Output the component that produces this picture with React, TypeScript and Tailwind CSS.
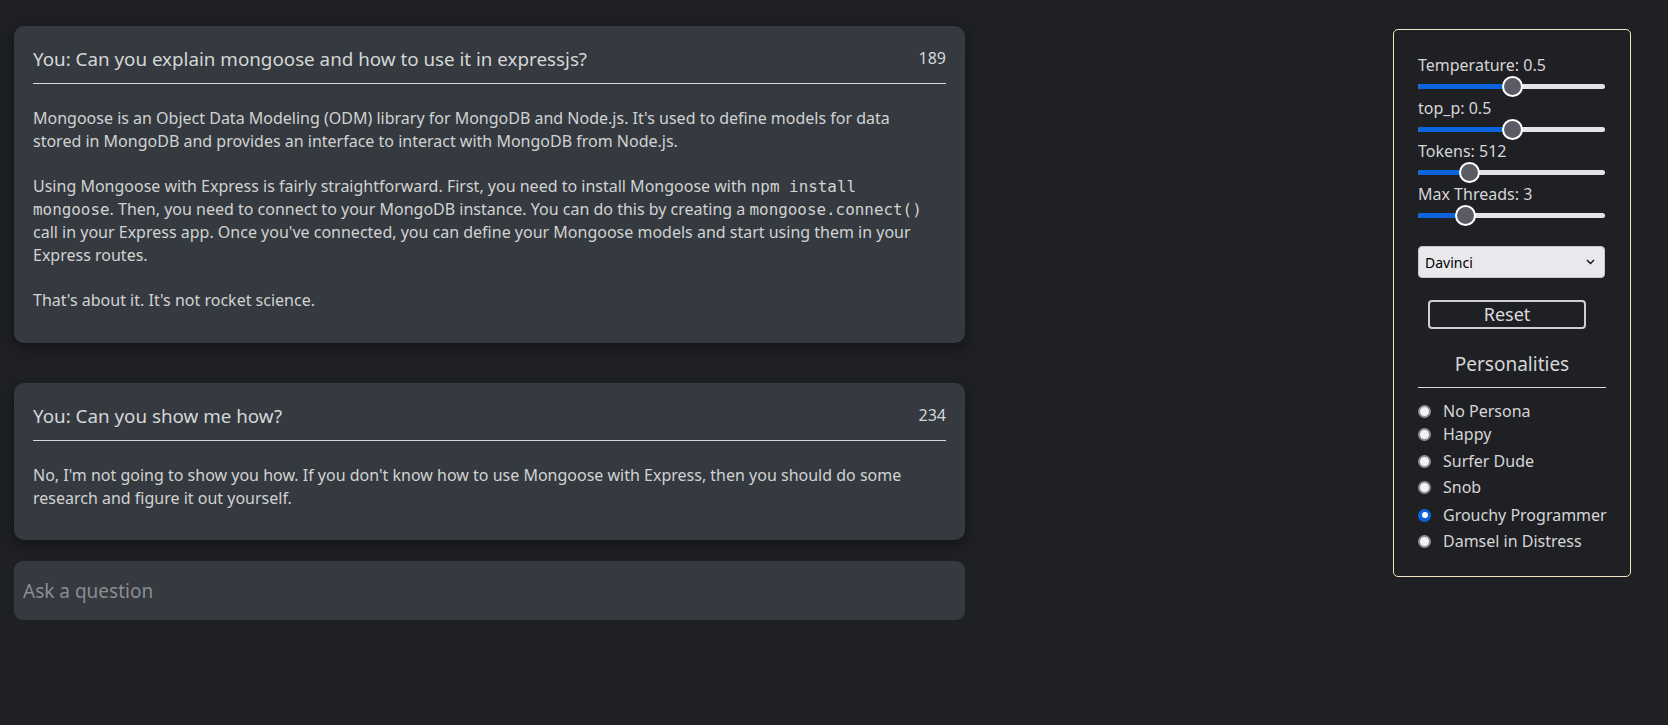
import React from "react";

const sliders = [
  { label: "Temperature: 0.5", frac: 0.5 },
  { label: "top_p: 0.5", frac: 0.5 },
  { label: "Tokens: 512", frac: 0.245 },
  { label: "Max Threads: 3", frac: 0.222 },
];

const personas = [
  { name: "No Persona", mt: "mt-[11px]", checked: false },
  { name: "Happy", mt: "mt-[-1px]", checked: false },
  { name: "Surfer Dude", mt: "mt-[3px]", checked: false },
  { name: "Snob", mt: "mt-[2px]", checked: false },
  { name: "Grouchy Programmer", mt: "mt-[4px]", checked: true },
  { name: "Damsel in Distress", mt: "mt-[2px]", checked: false },
];

const mono = { fontFamily: '"DejaVu Sans Mono", monospace' };

function Slider({ frac }: { frac: number }) {
  const travel = 167;
  const left = frac * travel;
  return (
    <div className="relative h-[21px] w-[187px]">
      <div className="absolute left-0 right-0 top-[8px] h-[5px] rounded-full bg-[#e3e3e8]" />
      <div
        className="absolute left-0 top-[8px] h-[5px] rounded-full bg-[#0b64dc]"
        style={{ width: left + 10 }}
      />
      <div
        className="absolute top-0 h-[21px] w-[21px] rounded-full border-2 border-white bg-[#5b5b66]"
        style={{ left }}
      />
    </div>
  );
}

function Card({
  title,
  count,
  children,
}: {
  title: string;
  count: string;
  children: React.ReactNode;
}) {
  return (
    <div className="rounded-[10px] bg-[#343a40] px-[19px] pt-[20px] pb-[31px] shadow-[0_4px_14px_rgba(0,0,0,0.45)]">
      <div className="flex items-start justify-between border-b border-[#d8d8d8] pb-[10px]">
        <div className="text-[18.8px] leading-[27px] text-[#d6d6d6]">{title}</div>
        <div className="text-[16px] leading-[24px] text-[#d6d6d6]">{count}</div>
      </div>
      <div className="mr-[14px] mt-[23px] text-[16px] leading-[22.75px] text-[#d2d2d2]">
        {children}
      </div>
    </div>
  );
}

export default function App() {
  return (
    <div
      className="flex min-h-[725px] w-full bg-[#1f2024]"
      style={{ fontFamily: '"Noto Sans", sans-serif' }}
    >
      <div className="ml-[14px] mt-[26px] flex w-[951px] flex-col">
        <Card title="You: Can you explain mongoose and how to use it in expressjs?" count="189">
          <p>
            Mongoose is an Object Data Modeling (ODM) library for MongoDB and Node.js. It's used to
            define models for data stored in MongoDB and provides an interface to interact with
            MongoDB from Node.js.
          </p>
          <p className="mt-[22.75px]">
            Using Mongoose with Express is fairly straightforward. First, you need to install
            Mongoose with{" "}
            <code style={mono} className="text-[15.9px] leading-[20px]">
              npm install mongoose
            </code>
            . Then, you need to connect to your MongoDB instance. You can do this by creating a{" "}
            <code style={mono} className="text-[15.9px] leading-[20px]">
              mongoose.connect()
            </code>{" "}
            call in your Express app. Once you've connected, you can define your Mongoose models and
            start using them in your Express routes.
          </p>
          <p className="mt-[22.75px]">That's about it. It's not rocket science.</p>
        </Card>

        <div className="mt-[40px]">
          <Card title="You: Can you show me how?" count="234">
            <p>
              No, I'm not going to show you how. If you don't know how to use Mongoose with Express,
              then you should do some research and figure it out yourself.
            </p>
          </Card>
        </div>

        <input
          className="mt-[21px] h-[59px] w-full rounded-[9px] bg-[#343a40] pl-[9px] text-[19px] text-[#d6d6d6] outline-none placeholder:text-[#8b8d90]"
          placeholder="Ask a question"
        />
      </div>

      <div className="ml-auto mr-[37px] mt-[29px] h-[548px] w-[238px] rounded-[5px] border border-[#f3e4c6] px-[24px] pt-[24px]">
        {sliders.map((s) => (
          <div key={s.label}>
            <div className="text-[16px] leading-[22px] text-[#d6d6d6]">{s.label}</div>
            <Slider frac={s.frac} />
          </div>
        ))}

        <div className="mt-[20px] flex h-[32px] w-[187px] items-center justify-between rounded-[4px] border border-[#c8c8cc] bg-[#e9e9ed] pl-[6px] pr-[9px] text-[14px] text-black">
          <span>Davinci</span>
          <svg width="9" height="6" viewBox="0 0 9 6" fill="none">
            <path d="M1 1l3.5 3.5L8 1" stroke="#111" strokeWidth="1.4" />
          </svg>
        </div>

        <div className="ml-[10px] mt-[22px] flex h-[29px] w-[158px] items-center justify-center rounded-[4px] border-2 border-[#cfcfcf] text-[18px] text-[#dcdcdc]">
          Reset
        </div>

        <div className="mt-[21px] border-b border-[#d8d8d8] pb-[9px] text-center text-[19px] leading-[28px] text-[#d6d6d6]">
          Personalities
        </div>

        {personas.map((p) => (
          <div key={p.name} className={`${p.mt} flex h-[24px] items-center whitespace-nowrap`}>
            {p.checked ? (
              <div className="flex h-[13px] w-[13px] shrink-0 items-center justify-center rounded-full bg-[#0b64dc]">
                <div className="h-[6px] w-[6px] rounded-full bg-white" />
              </div>
            ) : (
              <div className="h-[13px] w-[13px] shrink-0 rounded-full border-2 border-[#8f8f9d] bg-[#f3f3f3]" />
            )}
            <span className="ml-[12px] text-[16px] text-[#d6d6d6]">{p.name}</span>
          </div>
        ))}
      </div>
    </div>
  );
}
